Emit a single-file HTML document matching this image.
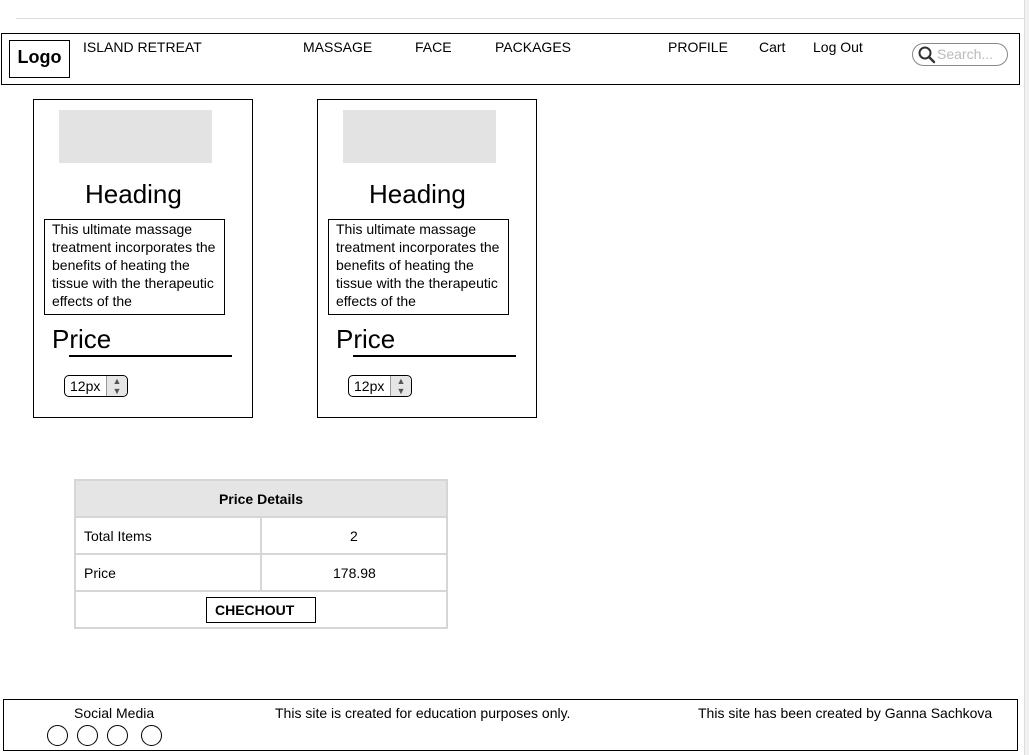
<!DOCTYPE html>
<html><head><meta charset="utf-8"><style>
*{margin:0;padding:0;box-sizing:border-box}
body{width:1029px;height:755px;position:relative;background:#fff;font-family:"Liberation Sans",Arial,sans-serif;color:#000;overflow:hidden}
.a{position:absolute;white-space:nowrap}
.b{position:absolute;border:1px solid #000}
.nav{font-size:14px;top:39px}
.card .t{font-size:14px;line-height:18px;white-space:normal}
</style></head><body>
<div class="a" style="left:16px;top:18px;width:1013px;height:1px;background:#ddd"></div>
<div class="a" style="left:1024px;top:0;width:5px;height:755px;background:#f0f0f0;border-left:1px solid #ddd"></div>

<div class="b" style="left:1px;top:33px;width:1019px;height:52px"></div>
<div class="b" style="left:9px;top:40px;width:61px;height:38px;font-weight:bold;font-size:18px;text-align:center;line-height:32px">Logo</div>
<div class="a nav" style="left:83px">ISLAND RETREAT</div>
<div class="a nav" style="left:303px">MASSAGE</div>
<div class="a nav" style="left:415px">FACE</div>
<div class="a nav" style="left:495px">PACKAGES</div>
<div class="a nav" style="left:668px">PROFILE</div>
<div class="a nav" style="left:759px">Cart</div>
<div class="a nav" style="left:813px">Log Out</div>
<div class="a" style="left:912px;top:43px;width:96px;height:23px;border:1px solid #888;border-radius:12px"></div>
<svg class="a" style="left:917px;top:45px" width="20" height="20" viewBox="0 0 20 20"><circle cx="8" cy="8" r="5.5" fill="none" stroke="#333" stroke-width="2"/><path d="M12 12l5 5" stroke="#333" stroke-width="2.4" stroke-linecap="round"/></svg>
<div class="a" style="left:937px;top:46px;font-size:14px;color:#bbb">Search...</div>

<div class="card">
<div class="b" style="left:33px;top:99px;width:220px;height:319px"></div>
<div class="a" style="left:59px;top:110px;width:153px;height:53px;background:#e3e3e3"></div>
<div class="a" style="left:85px;top:179px;font-size:26px">Heading</div>
<div class="b t" style="left:44px;top:219px;width:181px;height:96px;padding:0 0 0 7px">This ultimate massage treatment incorporates the benefits of heating the tissue with the therapeutic effects of the</div>
<div class="a" style="left:52px;top:324px;font-size:26px">Price</div>
<div class="a" style="left:69px;top:355px;width:163px;height:2px;background:#000"></div>
<div class="b" style="left:64px;top:375px;width:64px;height:22px;border-radius:5px;font-size:14px;padding:2px 0 0 5px">12px</div>
<div class="a" style="left:106px;top:376px;width:21px;height:20px;background:#e6e6e6;border-left:1px solid #999;border-radius:0 5px 5px 0;font-size:9px;text-align:center;line-height:10px;color:#555">▲<br>▼</div>
</div>
<div class="card">
<div class="b" style="left:317px;top:99px;width:220px;height:319px"></div>
<div class="a" style="left:343px;top:110px;width:153px;height:53px;background:#e3e3e3"></div>
<div class="a" style="left:369px;top:179px;font-size:26px">Heading</div>
<div class="b t" style="left:328px;top:219px;width:181px;height:96px;padding:0 0 0 7px">This ultimate massage treatment incorporates the benefits of heating the tissue with the therapeutic effects of the</div>
<div class="a" style="left:336px;top:324px;font-size:26px">Price</div>
<div class="a" style="left:353px;top:355px;width:163px;height:2px;background:#000"></div>
<div class="b" style="left:348px;top:375px;width:64px;height:22px;border-radius:5px;font-size:14px;padding:2px 0 0 5px">12px</div>
<div class="a" style="left:390px;top:376px;width:21px;height:20px;background:#e6e6e6;border-left:1px solid #999;border-radius:0 5px 5px 0;font-size:9px;text-align:center;line-height:10px;color:#555">▲<br>▼</div>
</div>

<div class="a" style="left:74px;top:479px;width:374px;height:150px;border:2px solid #d6d6d6"></div>
<div class="a" style="left:76px;top:481px;width:370px;height:35px;background:#e5e5e5;font-weight:bold;font-size:14px;text-align:center;line-height:36px">Price Details</div>
<div class="a" style="left:76px;top:516px;width:370px;height:2px;background:#d6d6d6"></div>
<div class="a" style="left:76px;top:553px;width:370px;height:2px;background:#d6d6d6"></div>
<div class="a" style="left:76px;top:590px;width:370px;height:2px;background:#d6d6d6"></div>
<div class="a" style="left:260px;top:518px;width:2px;height:72px;background:#d6d6d6"></div>
<div class="a" style="left:84px;top:528px;font-size:14px">Total Items</div>
<div class="a" style="left:350px;top:528px;font-size:14px">2</div>
<div class="a" style="left:84px;top:565px;font-size:14px">Price</div>
<div class="a" style="left:333px;top:565px;font-size:14px">178.98</div>
<div class="b" style="left:206px;top:597px;width:110px;height:26px;font-weight:bold;font-size:14px;line-height:24px;padding-left:8px">CHECHOUT</div>

<div class="b" style="left:3px;top:699px;width:1015px;height:52px"></div>
<div class="a" style="left:74px;top:705px;font-size:14px">Social Media</div>
<div class="a" style="left:275px;top:705px;font-size:14px">This site is created for education purposes only.</div>
<div class="a" style="left:698px;top:705px;font-size:14px">This site has been created by Ganna Sachkova</div>
<div class="b" style="left:47px;top:725px;width:21px;height:21px;border-radius:50%"></div>
<div class="b" style="left:77px;top:725px;width:21px;height:21px;border-radius:50%"></div>
<div class="b" style="left:107px;top:725px;width:21px;height:21px;border-radius:50%"></div>
<div class="b" style="left:141px;top:725px;width:21px;height:21px;border-radius:50%"></div>
</body></html>
